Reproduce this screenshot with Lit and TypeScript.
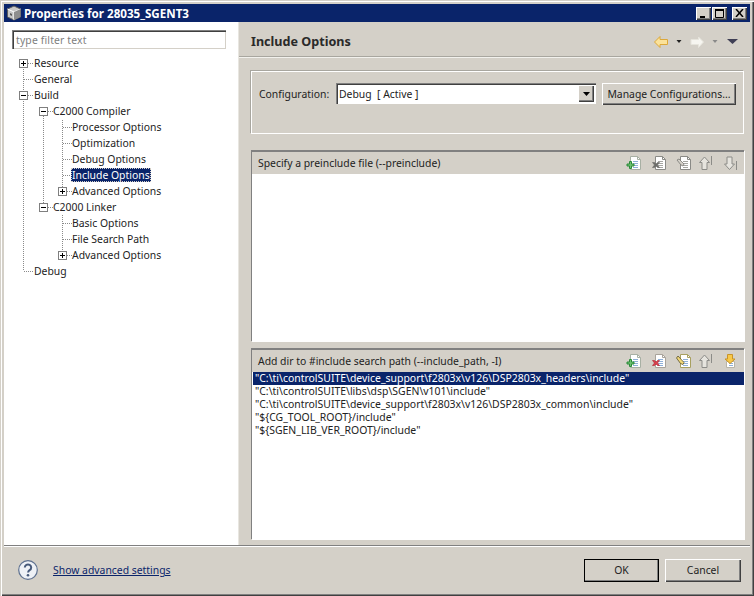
import { LitElement, html, css, svg } from "lit";
import { customElement } from "lit/decorators.js";

type Row = { label: string; depth: number; exp?: "+" | "-"; sel?: boolean };

const ROWS: Row[] = [
  { label: "Resource", depth: 0, exp: "+" },
  { label: "General", depth: 0 },
  { label: "Build", depth: 0, exp: "-" },
  { label: "C2000 Compiler", depth: 1, exp: "-" },
  { label: "Processor Options", depth: 2 },
  { label: "Optimization", depth: 2 },
  { label: "Debug Options", depth: 2 },
  { label: "Include Options", depth: 2, sel: true },
  { label: "Advanced Options", depth: 2, exp: "+" },
  { label: "C2000 Linker", depth: 1, exp: "-" },
  { label: "Basic Options", depth: 2 },
  { label: "File Search Path", depth: 2 },
  { label: "Advanced Options", depth: 2, exp: "+" },
  { label: "Debug", depth: 0 },
];

const TEXT_X = [29, 48, 67];

const doc = (stroke: string, line: string) => svg`
  <path d="M4.500 1.500h7l3 3v10h-10z" fill="#fff" stroke="${stroke}"/>
  <path d="M11.500 1.500v3h3" fill="none" stroke="${stroke}"/>
  <path d="M7 6.500h5M7 8.500h5M7 10.500h5M7 12.500h5" stroke="${line}"/>`;

const icons = {
  addOn: svg`${doc("#a8b0a4", "#8fb0d8")}
    <path d="M3.500 6.500h2v2.500h2.500v2h-2.500v2.500h-2v-2.500h-2.500v-2h2.500z" fill="#6cc070" stroke="#2c8a3a"/>`,
  delOff: svg`${doc("#8a8a86", "#a6a6a2")}
    <path d="M1.500 7.500l2 0 1.500 1.500 1.500-1.500 2 0-2 2.500 2 2.500-2 0-1.500-1.500-1.500 1.500-2 0 2-2.500z" fill="#6d6d6a" stroke="#6d6d6a" stroke-width=".6"/>`,
  delOn: svg`${doc("#a8a39a", "#8fb0d8")}
    <path d="M1.500 7.500l2 0 1.500 1.500 1.500-1.500 2 0-2 2.500 2 2.500-2 0-1.500-1.500-1.500 1.500-2 0 2-2.500z" fill="#d8404c" stroke="#b01f2c" stroke-width=".6"/>`,
  editOff: svg`${doc("#8a8a86", "#a6a6a2")}
    <path d="M3 4l5 5-1 2-2-1-4-5z" fill="#d4d0c8" stroke="#7a7a76" stroke-width=".8"/>`,
  editOn: svg`${doc("#a8a060", "#8fb0d8")}
    <path d="M2 3l6 6.500-1 2-2.500-1-4-5.500z" fill="#f2d878" stroke="#58502c" stroke-width=".8"/>`,
  upOff: svg`<path d="M7.500 2l5 5.500h-2.500v7h-5v-7h-2.500z" fill="#e6e4de" stroke="#8c8c88"/>
    <path d="M14.500 1v9" stroke="#8c8c88"/>`,
  downOff: svg`<path d="M7.500 14.500l5-5.500h-2.500v-7h-5v7h-2.500z" fill="#e6e4de" stroke="#8c8c88"/>
    <path d="M14.500 6v9" stroke="#8c8c88"/>`,
  downOn: svg`<path d="M4.500 8.500h8v6h-8z" fill="#fff" stroke="#b8b4a8"/>
    <path d="M7 10.500h4M7 12.500h4" stroke="#8fb0d8"/>
    <path d="M8 10.500l5-4.500h-2.500v-4.500h-5v4.500h-2.500z" fill="#f8c848" stroke="#c89428"/>`,
};

const ICON_GAPS = [0, 9, 9, 5, 9];

@customElement("app-root")
export class AppRoot extends LitElement {
  static styles = css`
    :host {
      display: block;
      width: 754px;
      height: 596px;
      font: 10.400px "Noto Sans", sans-serif;
      color: #222;
    }
    * { box-sizing: border-box; }
    svg { display: block; flex: none; }
    .window {
      display: flex;
      flex-direction: column;
      height: 596px;
      padding: 4px 4px 2px;
      background: #d4d0c8;
      box-shadow: inset 1px 1px 0 #d4d0c8, inset 2px 2px 0 #fff, inset -1px -1px 0 #404040, inset -2px -2px 0 #808080;
    }
    .title {
      height: 18px;
      flex: none;
      background: #0a246a;
      color: #fff;
      display: flex;
      align-items: center;
      padding: 0 3px 0 2px;
      font-weight: 700;
      font-size: 11.600px;
      gap: 2px;
    }
    .title .name { flex: 1; }
    .wc {
      width: 15px;
      height: 13px;
      background: #d4d0c8;
      box-shadow: inset 1px 1px 0 #fff, inset -1px -1px 0 #404040, inset -2px -2px 0 #808080;
      display: flex;
      align-items: center;
      justify-content: center;
      color: #000;
    }
    .wc.max { margin-left: -1px; }
    .wc.close { margin-left: 3px; }
    .main { height: 523px; flex: none; display: flex; }
    .left {
      width: 234px;
      flex: none;
      background: #fff;
      padding-top: 8px;
    }
    .filter {
      height: 19px;
      width: 214px;
      margin-left: 8px;
      background: #fff;
      color: #808080;
      padding: 2px 0 0 4px;
      line-height: 16px;
      letter-spacing: .15px;
      box-shadow: inset 1px 1px 0 #808080, inset 2px 2px 0 #404040, inset -1px -1px 0 #d4d0c8;
    }
    .tree { margin-top: 6px; position: relative; }
    .guides { position: absolute; left: -4px; top: 0; }
    .row {
      position: relative;
      height: 16px;
      display: flex;
      align-items: center;
      white-space: nowrap;
    }
    .row svg { position: absolute; top: 4px; }
    .row span { padding: 0 1px; line-height: 14px; height: 14px; }
    .row span.sel {
      background: #0a246a;
      color: #fff;
      outline: 1px dotted #d4d0c8;
      outline-offset: -1px;
    }
    .right {
      flex: 1;
      min-width: 0;
      border-left: 1px solid #e8e6e0;
      padding: 0 6px 0 12px;
      display: flex;
      flex-direction: column;
    }
    .head {
      height: 36px;
      flex: none;
      margin: 0 -6px 0 -12px;
      padding: 4px 12px 0;
      display: flex;
      align-items: center;
      border-bottom: 1px solid #f2f1ed;
      box-shadow: inset 0 -1px 0 #a8a69f;
    }
    .head h1 {
      flex: 1;
      margin: 0;
      font-size: 12.600px;
      font-weight: 700;
      color: #2a2a2a;
    }
    .group {
      margin-top: 13px;
      height: 63px;
      flex: none;
      border: 1px solid #fff;
      box-shadow: -1px -1px 0 #a8a69f;
      padding: 11px 6px 0 7px;
      display: flex;
      align-items: flex-start;
    }
    .cfg { line-height: 23px; width: 77px; flex: none; }
    .combo {
      width: 260px;
      height: 21px;
      flex: none;
      background: #fff;
      box-shadow: inset 1px 1px 0 #808080, inset 2px 2px 0 #404040, inset -1px -1px 0 #fff;
      display: flex;
      justify-content: space-between;
      padding: 2px 2px 2px 3px;
      line-height: 19px;
      white-space: pre;
      margin-right: 6px;
    }
    .arrowbtn {
      width: 16px;
      height: 17px;
      background: #d4d0c8;
      box-shadow: inset 1px 1px 0 #fff, inset -1px -1px 0 #404040, inset -2px -2px 0 #808080;
      display: flex;
      align-items: center;
      justify-content: center;
    }
    .btn {
      background: #d4d0c8;
      box-shadow: inset 1px 1px 0 #fff, inset -1px -1px 0 #404040, inset -2px -2px 0 #808080;
      display: flex;
      align-items: center;
      justify-content: center;
      flex: none;
    }
    .manage { width: 134px; height: 22px; }
    .section {
      border-top: 2px solid #808080;
      border-left: 1px solid #808080;
      display: flex;
      flex-direction: column;
      flex: none;
      box-shadow: 1px 1px 0 #fff;
    }
    .s1 { margin-top: 16px; height: 191px; }
    .s2 { margin-top: 7px; height: 191px; }
    .s-head {
      height: 22px;
      flex: none;
      padding: 0 6px 0 6px;
      display: flex;
      align-items: center;
    }
    .s-head .t { flex: 1; }
    .tools { display: flex; }
    .list {
      flex: 1;
      background: #fff;
      padding-left: 1px;
      overflow: hidden;
    }
    .item {
      height: 13px;
      line-height: 12px;
      padding-left: 2px;
      white-space: nowrap;
      font-size: 10.450px;
    }
    .item.on { background: #0a246a; color: #fff; }
    .footer {
      flex: 1;
      min-height: 0;
      border-top: 1px solid #808080;
      box-shadow: inset 0 1px 0 #fff;
      display: flex;
      align-items: center;
      padding: 0 9px 0 14px;
    }
    .link { margin-left: 15px; flex: 1; color: #0a246a; text-decoration: underline; }
    .foot-btn { width: 76px; height: 23px; }
    .ok {
      width: 75px;
      outline: 1px solid #000;
      outline-offset: -1px;
      margin-right: 6px;
    }
  `;

  private tree() {
    return svg`
      <svg class="guides" width="100" height="230" fill="none" stroke="#8a8a8a" stroke-dasharray="1 1">
        <path d="M23.500 12v204M28 8.500h5M24 24.500h9M28 40.500h5M24 216.500h9"/>
        <path d="M43.500 61v96M48 56.500h5M48 152.500h5"/>
        <path d="M62.500 65v72M63 72.500h9M63 88.500h9M63 104.500h9M63 120.500h9M67 136.500h5"/>
        <path d="M62.500 160v40M63 168.500h9M63 184.500h9M67 200.500h5"/>
      </svg>`;
  }

  private expander(kind: "+" | "-", depth: number) {
    const x = [15, 35, 54][depth];
    return html`<svg style="left:${x}px" width="9" height="9">
      <rect x=".5" y=".5" width="8" height="8" fill="#fff" stroke="#7f7f7f"/>
      <path d="M2 4.500h5${kind === "+" ? "M4.500 2v5" : ""}" stroke="#000"/>
    </svg>`;
  }

  private tool(body: unknown, i: number) {
    return html`<svg style="margin-left:${ICON_GAPS[i]}px" width="16" height="16">${body}</svg>`;
  }

  render() {
    return html`<div class="window">
      <div class="title">
        <svg width="16" height="16">
          <path d="M8 1l6.500 3v8L8 15 1.500 12V4z" fill="#c8c8c8" stroke="#5c5c5c"/>
          <path d="M1.500 4L8 7l6.500-3M8 7v8" fill="none" stroke="#fff"/>
          <path d="M8 7l6.500-3v8L8 15z" fill="#8e8e8e"/>
          <path d="M4 8l2 1v2L4 10z" fill="#5c5c5c"/>
        </svg>
        <div class="name">Properties for 28035_SGENT3</div>
        <div class="wc"><svg width="9" height="9"><path d="M1 8h5" stroke="#000" stroke-width="2"/></svg></div>
        <div class="wc max"><svg width="10" height="9"><path d="M.5 1.500h8v7h-8z" fill="none" stroke="#000"/><path d="M0 1h9" stroke="#000" stroke-width="2"/></svg></div>
        <div class="wc close"><svg width="9" height="8"><path d="M1 0l7 8M8 0l-7 8" stroke="#000" stroke-width="1.500"/></svg></div>
      </div>
      <div class="main">
        <div class="left">
          <div class="filter">type filter text</div>
          <div class="tree">
            ${this.tree()}
            ${ROWS.map(
              (r) => html`<div class="row" style="padding-left:${TEXT_X[r.depth]}px">
                ${r.exp ? this.expander(r.exp, r.depth) : ""}
                <span class=${r.sel ? "sel" : ""}>${r.label}</span>
              </div>`
            )}
          </div>
        </div>
        <div class="right">
          <div class="head">
            <h1>Include Options</h1>
            <svg width="92" height="14">
              <path d="M8.500 7L14 1.500v3h7.500v5H14v3z" fill="#fbe29a" stroke="#dca83a"/>
              <path d="M30.500 5h5L33 8z" fill="#222"/>
              <path d="M52.500 4.500H45v5h7.500v3L57.500 7l-5-5z" fill="#f6f5f0" stroke="#e6e4dc"/>
              <path d="M66.500 5h5L69 8z" fill="#8a8a8a"/>
              <path d="M81 4h11l-5.500 5z" fill="#3f3f55"/>
            </svg>
          </div>
          <div class="group">
            <div class="cfg">Configuration:</div>
            <div class="combo">
              <div>Debug  [ Active ]</div>
              <div class="arrowbtn"><svg width="7" height="4"><path d="M0 0h7L3.500 4z" fill="#000"/></svg></div>
            </div>
            <div class="btn manage">Manage Configurations...</div>
          </div>
          <div class="section s1">
            <div class="s-head">
              <div class="t">Specify a preinclude file (--preinclude)</div>
              <div class="tools">
                ${[icons.addOn, icons.delOff, icons.editOff, icons.upOff, icons.downOff].map((b, i) => this.tool(b, i))}
              </div>
            </div>
            <div class="list"></div>
          </div>
          <div class="section s2">
            <div class="s-head">
              <div class="t">Add dir to #include search path (--include_path, -I)</div>
              <div class="tools">
                ${[icons.addOn, icons.delOn, icons.editOn, icons.upOff, icons.downOn].map((b, i) => this.tool(b, i))}
              </div>
            </div>
            <div class="list">
              <div class="item on">"C:\\ti\\controlSUITE\\device_support\\f2803x\\v126\\DSP2803x_headers\\include"</div>
              <div class="item">"C:\\ti\\controlSUITE\\libs\\dsp\\SGEN\\v101\\include"</div>
              <div class="item">"C:\\ti\\controlSUITE\\device_support\\f2803x\\v126\\DSP2803x_common\\include"</div>
              <div class="item">"\${CG_TOOL_ROOT}/include"</div>
              <div class="item">"\${SGEN_LIB_VER_ROOT}/include"</div>
            </div>
          </div>
        </div>
      </div>
      <div class="footer">
        <svg width="20" height="20">
          <circle cx="10" cy="10" r="9.300" fill="#eef1f6" stroke="#5e7190" stroke-width="1.200"/>
          <path d="M6.800 7.500a3.200 3 0 1 1 4.800 2.600c-1 .7-1.500 1.100-1.500 2.400" fill="none" stroke="#46597a" stroke-width="2"/>
          <circle cx="10" cy="15.300" r="1.300" fill="#46597a"/>
        </svg>
        <div class="link">Show advanced settings</div>
        <div class="btn foot-btn ok">OK</div>
        <div class="btn foot-btn">Cancel</div>
      </div>
    </div>`;
  }
}
